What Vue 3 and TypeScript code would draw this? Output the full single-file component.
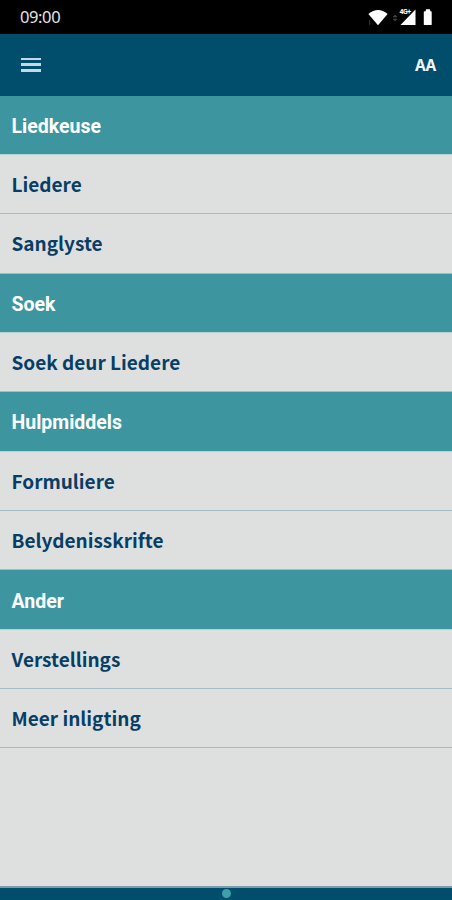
<script setup lang="ts">
interface Section {
  title: string
  items: string[]
}

const sections: Section[] = [
  { title: 'Liedkeuse', items: ['Liedere', 'Sanglyste'] },
  { title: 'Soek', items: ['Soek deur Liedere'] },
  { title: 'Hulpmiddels', items: ['Formuliere', 'Belydenisskrifte'] },
  { title: 'Ander', items: ['Verstellings', 'Meer inligting'] },
]
</script>

<template>
  <div class="screen">
    <div class="status">
      <span class="clock">09:00</span>
      <svg class="indicators" width="70" height="20" viewBox="0 0 70 20">
        <path d="M.4 6Q10 -2 19.6 6L10 17.2Z" fill="#fff" />
        <path d="M1.5 12v5M27 7l-2 2h4zM27 13l-2-2h4z" stroke="#444" fill="#444" stroke-width=".6" />
        <path d="M47.5 1.5V17H32.5Z" fill="#fff" />
        <text x="31.5" y="6" class="network">4G+</text>
        <path d="M56.5 4H58.5V2h3V4H63V16.4h-6.5z" fill="#fff" stroke="#fff" stroke-width="1.4" stroke-linejoin="round" />
      </svg>
    </div>
    <header class="toolbar">
      <button class="menu" aria-label="Menu"><i></i><i></i><i></i></button>
      <button class="text-size">AA</button>
    </header>
    <main class="list">
      <section v-for="section in sections" :key="section.title">
        <h2 class="row heading"><span>{{ section.title }}</span></h2>
        <div v-for="item in section.items" :key="item" class="row item"><span>{{ item }}</span></div>
      </section>
    </main>
    <footer class="bottom"><span class="dot"></span></footer>
  </div>
</template>

<style>
body {
  margin: 0;
}
</style>

<style scoped>
.screen {
  display: flex;
  flex-direction: column;
  width: 452px;
  height: 900px;
  overflow: hidden;
  background: #dee0df;
  font-family: Roboto, sans-serif;
}
.status {
  box-sizing: border-box;
  height: 34px;
  padding: 1px 14px 0 20px;
  display: flex;
  align-items: center;
  justify-content: space-between;
  background: #000;
  color: #e4e4e4;
}
.clock {
  font: 16.5px/32px "Noto Sans", sans-serif;
  letter-spacing: -0.4px;
  padding-bottom: 1px;
}
.network {
  font: bold 7px Roboto, sans-serif;
  fill: #fff;
  stroke: #000;
  stroke-width: 0.8px;
  paint-order: stroke;
  letter-spacing: -0.5px;
}
.toolbar {
  box-sizing: border-box;
  height: 61.5px;
  padding: 0 16px 0 21px;
  display: flex;
  align-items: center;
  justify-content: space-between;
  background: #014d6c;
}
button {
  padding: 0;
  border: 0;
  background: none;
}
.menu {
  display: flex;
  flex-direction: column;
  gap: 3px;
  width: 20px;
}
.menu i {
  height: 2.6px;
  background: #c4d9e8;
}
.text-size {
  color: #f2f6f8;
  font: bold 15.5px "Noto Sans", sans-serif;
  letter-spacing: -0.2px;
}
.row {
  box-sizing: border-box;
  display: flex;
  align-items: center;
  height: 59.37px;
  margin: 0;
  padding: 0 11.5px;
  white-space: nowrap;
}
.heading {
  padding-top: 3px;
  background: #3d969f;
  color: #fff;
  font: bold 19.5px Roboto, sans-serif;
  border-bottom: 1px solid #b5d1d3;
}
.item {
  padding-bottom: 1px;
  color: #083e65;
  font: bold 19px "Noto Sans CJK SC", sans-serif;
  border-bottom: 1px solid #a5bbc5;
}
.bottom {
  box-sizing: border-box;
  display: flex;
  justify-content: center;
  align-items: center;
  height: 14px;
  margin-top: auto;
  border-top: 2px solid #7d9cab;
  background: #014d6c;
}
.dot {
  width: 9px;
  height: 9px;
  margin-bottom: 2px;
  border-radius: 50%;
  background: #3da0ab;
}
</style>
